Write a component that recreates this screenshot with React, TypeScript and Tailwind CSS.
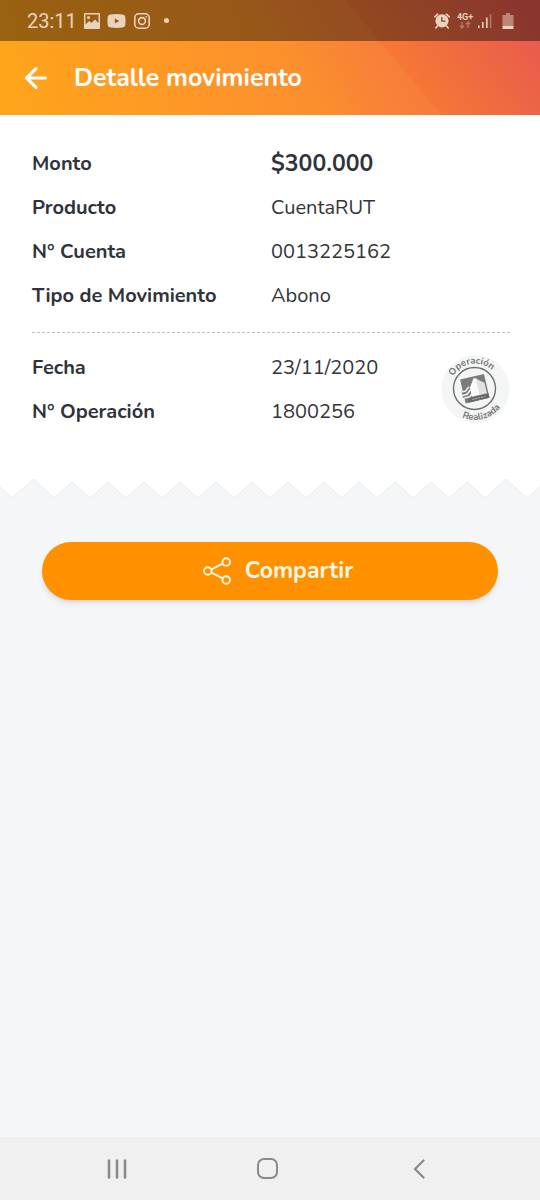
import { LuArrowLeft } from "react-icons/lu";

const MOVEMENT = [
  { label: "Monto", value: "$300.000", strong: true },
  { label: "Producto", value: "CuentaRUT" },
  { label: "N° Cuenta", value: "0013225162" },
  { label: "Tipo de Movimiento", value: "Abono" },
];

const OPERATION = [
  { label: "Fecha", value: "23/11/2020" },
  { label: "N° Operación", value: "1800256" },
];

const ZIGZAG =
  "M-2 8 L12 21 L34 2 L54 21 L72 5 L90 21 L108 5 L126 21 L144 5 L162 21 L180 5 L198 21 L216 5 L234 21 L252 5 L270 21 L288 5 L306 21 L324 5 L342 21 L359 5 L377 21 L395 5 L413 21 L431 5 L449 21 L467 5 L485 21 L506 2 L527 21 L542 8";

function StatusBar() {
  return (
    <div className="relative flex h-[41px] items-center justify-between bg-black/40 pr-[26px] pl-[27px] text-[#ead3bd]">
      <div className="flex items-center">
        <span className="w-[57px] font-[Roboto,sans-serif] text-[20px] leading-6">23:11</span>
        <svg className="h-4 w-4" viewBox="0 0 16 16" fill="currentColor" aria-hidden="true">
          <path
            fillRule="evenodd"
            d="M1 0h14a1 1 0 0 1 1 1v14a1 1 0 0 1-1 1H1a1 1 0 0 1-1-1V1a1 1 0 0 1 1-1ZM1.500 1.500v10l3.500-3.500 2.500 2 3.500-3.500 3.500 3.500V1.500ZM4.500 3a1.500 1.500 0 1 1 0 3 1.500 1.500 0 0 1 0-3Z"
          />
        </svg>
        <svg className="ml-[7px] h-[14px] w-[19px]" viewBox="0 0 18 14" fill="currentColor" aria-hidden="true">
          <path
            fillRule="evenodd"
            d="M3 .5Q9-.3 15 .5 17.500.800 17.800 3 18.200 7 17.800 11 17.500 13.200 15 13.500 9 14.300 3 13.500.500 13.200.200 11-.2 7 .2 3 .5.800 3 .5ZM7.300 4.500v5l4.500-2.500Z"
          />
        </svg>
        <svg
          className="ml-2 h-4 w-4"
          viewBox="0 0 16 16"
          fill="none"
          stroke="currentColor"
          strokeWidth="1.6"
          aria-hidden="true"
        >
          <rect x=".8" y=".8" width="14.4" height="14.4" rx="4" />
          <circle cx="8" cy="8" r="3.400" />
          <circle cx="12.200" cy="3.800" r=".9" fill="currentColor" stroke="none" />
        </svg>
        <span className="ml-[14px] h-[5px] w-[5px] rounded-full bg-current" />
      </div>
      <div className="flex items-center">
        <svg className="h-4 w-4" viewBox="0 0 16 16" fill="currentColor" aria-hidden="true">
          <path
            fillRule="evenodd"
            d="M8 1.200a6.600 6.600 0 1 1 0 13.200A6.600 6.600 0 0 1 8 1.200ZM7.200 4v4.800h4.300V7.500h-3V4Z"
          />
          <path
            d="M.8 3.800 3.600 1.200M15.200 3.800 12.400 1.200M3.200 13.200 1.800 15M12.800 13.200 14.200 15"
            stroke="currentColor"
            strokeWidth="1.600"
            strokeLinecap="round"
          />
        </svg>
        <div className="ml-[7px] flex w-4 flex-col items-center">
          <span className="font-[Roboto,sans-serif] text-[9px] leading-2 font-bold">4G+</span>
          <svg
            className="h-2 w-3 opacity-40"
            viewBox="0 0 12 8"
            fill="none"
            stroke="currentColor"
            strokeWidth="1.500"
            aria-hidden="true"
          >
            <path d="M3 1v6M.8 4.800 3 7l2.200-2.200M9 7V1M6.800 3.200 9 1l2.200 2.200" />
          </svg>
        </div>
        <svg className="ml-1 h-4 w-[15px]" viewBox="0 0 15 16" fill="currentColor" aria-hidden="true">
          <path d="M1 12.500h1.600V15H1ZM5 9h1.600v6H5ZM9 4.500h1.600V15H9Z" />
          <path d="M12.800 1h1.600v14h-1.600Z" opacity=".4" />
        </svg>
        <svg className="ml-[10px] h-4 w-3" viewBox="0 0 12 16" fill="currentColor" aria-hidden="true">
          <path d="M4 0h4v2h3.500v11H.5V2H4Z" opacity=".5" />
          <path d="M.5 13h11v3H.5Z" />
        </svg>
      </div>
    </div>
  );
}

function Header() {
  return (
    <header className="relative bg-linear-[80deg,#ffa51a_0%,#fd9529_40%,#fb8c2f_62%,#f77f3b_80%,#f57938_100%]">
      <svg
        className="absolute inset-0 h-full w-full"
        viewBox="0 0 540 115"
        preserveAspectRatio="none"
        aria-hidden="true"
      >
        <defs>
          <linearGradient id="corner" gradientUnits="userSpaceOnUse" x1="420" y1="115" x2="540" y2="30">
            <stop offset="0" stopColor="#f77a33" />
            <stop offset="1" stopColor="#e75a4e" />
          </linearGradient>
          <linearGradient id="edge" gradientUnits="userSpaceOnUse" x1="330" y1="110" x2="410" y2="50">
            <stop offset="0" stopColor="#f77c3b" stopOpacity="0" />
            <stop offset="1" stopColor="#f77c3b" stopOpacity="0.9" />
          </linearGradient>
        </defs>
        <path d="M250 0H345L441 115H250Z" fill="url(#edge)" />
        <path d="M345 0H540V115H441Z" fill="url(#corner)" />
      </svg>
      <StatusBar />
      <div className="relative flex h-[74px] items-center pl-5 text-white">
        <button type="button" aria-label="Volver" className="flex h-8 w-8 items-center justify-center">
          <LuArrowLeft className="h-8 w-8" strokeWidth={2.4} />
        </button>
        <h1 className="ml-[22px] text-[25px] leading-8 font-bold">Detalle movimiento</h1>
      </div>
    </header>
  );
}

function Rows({ items }: { items: { label: string; value: string; strong?: boolean }[] }) {
  return (
    <dl>
      {items.map((item) => (
        <div key={item.label} className="grid h-11 grid-cols-2 items-center leading-7">
          <dt className="text-[20px] font-bold">{item.label}</dt>
          <dd className={item.strong ? "text-[23px] font-bold" : "text-[20px]"}>{item.value}</dd>
        </div>
      ))}
    </dl>
  );
}

function Stamp() {
  return (
    <svg className="absolute top-2 right-0 h-[70px] w-[70px]" viewBox="0 0 70 70" role="img" aria-label="Operación realizada">
      <defs>
        <path id="stamp-top" d="M9.500 35a25.500 25.500 0 0 1 51 0" />
        <path id="stamp-bottom" d="M3 34a32 32 0 0 0 64 0" />
      </defs>
      <circle cx="35.500" cy="35" r="34" fill="#f4f5f5" />
      <circle cx="34.500" cy="34.500" r="21" fill="none" stroke="#6e6e6e" strokeWidth="1.400" />
      <g fill="#777" fontSize="9.500" fontWeight="700">
        <text textAnchor="middle">
          <textPath href="#stamp-top" startOffset="45%">
            Operación
          </textPath>
        </text>
        <text textAnchor="middle">
          <textPath href="#stamp-bottom" startOffset="58%">
            Realizada
          </textPath>
        </text>
      </g>
      <g transform="rotate(-13 34.500 34.500)">
        <path d="M22.500 22.500h24.500v24.500H22.500Z" fill="#7c7c7c" />
        <path d="M30 42V33l6-9 3 1.500V42Z" fill="#fafafa" />
        <path d="M38 25l7.500 6.500V42H38Z" fill="#e2e2e2" />
        <path d="M21 34h5l4-3v11h-9Z" fill="#7c7c7c" />
        <path
          d="M20 35h5l4-3M20 38.500h6l4-3.500M21 41.500h7l4-3.500"
          fill="none"
          stroke="#f4f5f5"
          strokeWidth="1.500"
          strokeLinecap="round"
        />
        <path d="M26 42.500h21v4.500H26Z" fill="#686868" />
        <path d="M30 44.700h13" stroke="#b4b4b4" strokeWidth="1" strokeDasharray="2 1" />
      </g>
    </svg>
  );
}

function ShareIcon() {
  return (
    <svg
      className="h-7 w-7"
      viewBox="0 0 28 28"
      fill="none"
      stroke="currentColor"
      strokeWidth="1.900"
      aria-hidden="true"
    >
      <circle cx="4.800" cy="14" r="3.800" />
      <circle cx="23.200" cy="5" r="3.800" />
      <circle cx="23.200" cy="23" r="3.800" />
      <path d="M8.300 12.400 19.800 6.700M8.300 15.600l11.500 5.700" />
    </svg>
  );
}

function NavBar() {
  return (
    <nav className="grid h-[63px] grid-cols-3 items-center bg-[#f0f0f0] pr-[46px] pl-[42px] text-[#8a8a8a]">
      <button type="button" aria-label="Recientes" className="flex h-full items-center justify-center">
        <svg className="h-5 w-5" viewBox="0 0 20 20" stroke="currentColor" strokeWidth="2.600" strokeLinecap="round">
          <path d="M2 1.500v17M10 1.500v17M18 1.500v17" />
        </svg>
      </button>
      <button type="button" aria-label="Inicio" className="flex h-full items-center justify-center">
        <span className="h-[21px] w-[21px] rounded-[7px] border-2 border-current" />
      </button>
      <button type="button" aria-label="Atrás" className="flex h-full items-center justify-center">
        <svg
          className="h-5 w-3"
          viewBox="0 0 12 20"
          fill="none"
          stroke="currentColor"
          strokeWidth="2.300"
          strokeLinecap="round"
          strokeLinejoin="round"
        >
          <path d="M10.500 1.500 2 10l8.500 8.500" />
        </svg>
      </button>
    </nav>
  );
}

export default function App() {
  return (
    <div className="flex min-h-screen flex-col bg-[#f5f6f8] font-[Nunito,Lato,sans-serif] text-[#30343a]">
      <Header />
      <main className="flex-1">
        <section className="bg-white pt-[27px] pr-[30px] pb-[43px] pl-8">
          <Rows items={MOVEMENT} />
          <hr className="mt-[14px] mb-[13px] border-t border-dashed border-[#bfc1c3]" />
          <div className="relative">
            <Rows items={OPERATION} />
            <Stamp />
          </div>
        </section>
        <svg className="block h-6 w-full" viewBox="0 0 540 24" preserveAspectRatio="none" aria-hidden="true">
          <path d={`${ZIGZAG} V-2 H-2 Z`} fill="#fff" />
          <path d={ZIGZAG} fill="none" stroke="#e9ebed" strokeWidth="1" />
        </svg>
        <div className="px-[42px] pt-[41px]">
          <button
            type="button"
            className="flex h-[58px] w-full items-center justify-center gap-[14px] rounded-full bg-[#ff9100] pl-4 text-[23px] leading-7 font-bold text-[#fff8e6] shadow-md"
          >
            <ShareIcon />
            Compartir
          </button>
        </div>
      </main>
      <NavBar />
    </div>
  );
}
